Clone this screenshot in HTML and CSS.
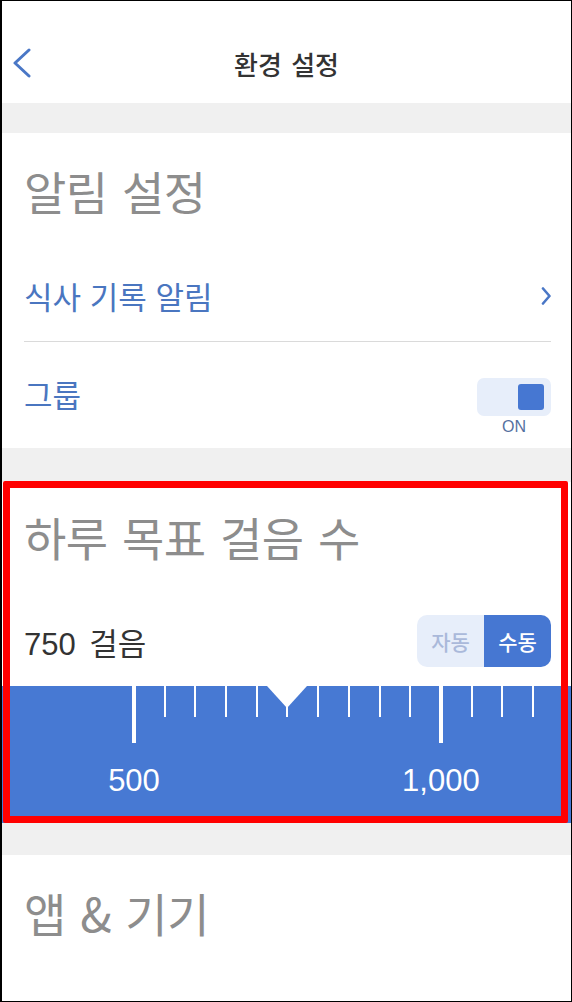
FILE: index.html
```html
<!DOCTYPE html>
<html lang="ko">
<head>
    <meta charset="UTF-8">
    <meta name="viewport" content="width=device-width, initial-scale=1.0">
    <title>환경 설정</title>
    <link rel="stylesheet" href="styles.css">
</head>
<body>

    <div class="screen">

        <!-- Top bar -->
        <header class="topbar">
            <button class="back" aria-label="뒤로">
                <svg width="20" height="30" viewBox="0 0 20 30">
                    <polyline points="18,2 4,15 18,28" />
                </svg>
            </button>
            <h1>환경 설정</h1>
            <span></span>
        </header>

        <div class="gap gap-top"></div>

        <!-- Notifications -->
        <section class="card card-alarm">
            <h2 class="card-title">알림 설정</h2>
            <div class="row row-link">
                <span class="row-label">식사 기록 알림</span>
                <svg class="chevron" width="10" height="18" viewBox="0 0 10 18">
                    <polyline points="2,1.5 8.5,9 2,16.5" />
                </svg>
            </div>
            <div class="row row-toggle">
                <span class="row-label">그룹</span>
                <div class="switch-wrap">
                    <div class="switch"><span class="knob"></span></div>
                    <span class="switch-text">ON</span>
                </div>
            </div>
        </section>

        <div class="gap gap-mid"></div>

        <!-- Daily step goal -->
        <section class="card card-goal">
            <h2 class="card-title">하루 목표 걸음 수</h2>
            <div class="row row-goal">
                <span class="goal-value">750 걸음</span>
                <div class="segmented">
                    <button>자동</button>
                    <button class="active">수동</button>
                </div>
            </div>
            <div class="ruler">
                <div class="scale">
                    <div class="step major"><span class="tick"></span><span class="num">500</span></div>
                    <div class="step"><span class="tick"></span></div>
                    <div class="step"><span class="tick"></span></div>
                    <div class="step"><span class="tick"></span></div>
                    <div class="step"><span class="tick"></span></div>
                    <div class="step pointer"><span class="tick"></span></div>
                    <div class="step"><span class="tick"></span></div>
                    <div class="step"><span class="tick"></span></div>
                    <div class="step"><span class="tick"></span></div>
                    <div class="step"><span class="tick"></span></div>
                    <div class="step major"><span class="tick"></span><span class="num">1,000</span></div>
                    <div class="step"><span class="tick"></span></div>
                    <div class="step"><span class="tick"></span></div>
                    <div class="step"><span class="tick"></span></div>
                </div>
            </div>
        </section>

        <div class="gap gap-low"></div>

        <!-- Apps & devices -->
        <section class="card card-apps">
            <h2 class="card-title">앱 &amp; 기기</h2>
        </section>

    </div>

</body>
</html>
```

FILE: styles.css
```css
body {
    margin: 0;
    padding: 0;
    font-family: "Liberation Sans", "Noto Sans CJK KR", sans-serif;
    background: #fff;
}

.screen {
    width: 572px;
    height: 1002px;
    box-sizing: border-box;
    border: 1px solid #000;
    border-left-width: 2px;
    overflow: hidden;
    background: #fff;
}

/* Top bar */
.topbar {
    height: 102px;
    box-sizing: border-box;
    padding: 22px 9px 0 9px;
    display: grid;
    grid-template-columns: 60px 1fr 60px;
    align-items: center;
}

.topbar h1 {
    margin: 0;
    text-align: center;
    font-family: "Noto Sans CJK KR", sans-serif;
    font-size: 26px;
    font-weight: 500;
    color: #333;
    word-spacing: 2px;
}

.back {
    background: none;
    border: none;
    padding: 0;
    width: 20px;
    height: 30px;
    display: flex;
}

.back polyline,
.chevron polyline {
    fill: none;
    stroke: #4a77c6;
    stroke-width: 3;
    stroke-linecap: round;
    stroke-linejoin: round;
}

.chevron polyline {
    stroke-width: 2.6;
}

/* Grey spacers between cards */
.gap {
    background: #f0f0f0;
}

.gap-top { height: 30px; }
.gap-mid { height: 34px; }
.gap-low { height: 32px; }

/* Cards */
.card {
    background: #fff;
    position: relative;
}

.card-title {
    margin: 0 20px 0 22px;
    font-family: "Noto Sans CJK KR", sans-serif;
    font-size: 46px;
    font-weight: 400;
    line-height: 60px;
    letter-spacing: -0.5px;
    word-spacing: 2px;
    color: #8d8d8d;
}

.card-alarm {
    height: 315px;
    padding-top: 27px;
    box-sizing: border-box;
}

.card-alarm .card-title {
    margin-bottom: 30px;
}

.row {
    margin: 0 20px 0 22px;
    display: flex;
    justify-content: space-between;
}

.row-label {
    font-family: "Noto Sans CJK KR", sans-serif;
    font-size: 31px;
    line-height: 32px;
    color: #4a76c0;
}

.row-link {
    height: 91px;
    align-items: center;
    border-bottom: 1px solid #dadada;
}

.row-toggle {
    height: 106px;
    box-sizing: border-box;
    padding-top: 36px;
    align-items: flex-start;
}

.switch-wrap {
    display: flex;
    flex-direction: column;
    align-items: center;
}

.switch {
    width: 74px;
    height: 38px;
    box-sizing: border-box;
    padding: 6px 7px;
    border-radius: 7px;
    background: #e7eefa;
    display: flex;
    justify-content: flex-end;
}

.knob {
    width: 26px;
    height: 26px;
    border-radius: 3px;
    background: #4677d2;
}

.switch-text {
    margin-top: 2px;
    font-size: 16px;
    line-height: 18px;
    color: #55709f;
}

/* Step goal card */
.card-goal {
    height: 341px;
    padding-top: 24px;
    box-sizing: border-box;
}

/* red highlight frame drawn over the card */
.card-goal::after {
    content: "";
    position: absolute;
    top: -1px;
    left: 1px;
    right: 3px;
    bottom: 0;
    border: 7px solid #ff0000;
    border-radius: 2px;
    z-index: 2;
}

.row-goal {
    margin-top: 49px;
    height: 52px;
    align-items: center;
}

.goal-value {
    font-size: 31px;
    color: #333;
    word-spacing: 5px;
}

.segmented {
    display: flex;
    width: 134px;
    height: 52px;
    border-radius: 10px;
    overflow: hidden;
}

.segmented button {
    flex: 1;
    border: none;
    padding: 0;
    font-family: "Noto Sans CJK KR", sans-serif;
    font-size: 21px;
    font-weight: 500;
    background: #e7eefa;
    color: #aab9da;
}

.segmented button.active {
    background: #4677d2;
    color: #fff;
}

.ruler {
    margin-top: 19px;
    height: 137px;
    background: #4779d3;
}

.scale {
    display: flex;
    padding-left: 132px;
}

.step {
    flex: none;
    width: 30.7px;
    display: flex;
    flex-direction: column;
    position: relative;
}

.tick {
    align-self: flex-start;
    width: 2px;
    height: 31px;
    margin-left: -1px;
    background: #fff;
}

.step.major .tick {
    width: 4px;
    height: 57px;
    margin-left: -2px;
}

.num {
    align-self: flex-start;
    margin-top: 20px;
    transform: translateX(-50%);
    white-space: nowrap;
    font-size: 31px;
    line-height: 36px;
    color: #fff;
}

.step.pointer::after {
    content: "";
    position: absolute;
    top: 0;
    left: -20px;
    border-left: 20px solid transparent;
    border-right: 20px solid transparent;
    border-top: 22px solid #fff;
}

/* Apps card */
.card-apps {
    padding-top: 27px;
    height: 200px;
    box-sizing: border-box;
}
```
